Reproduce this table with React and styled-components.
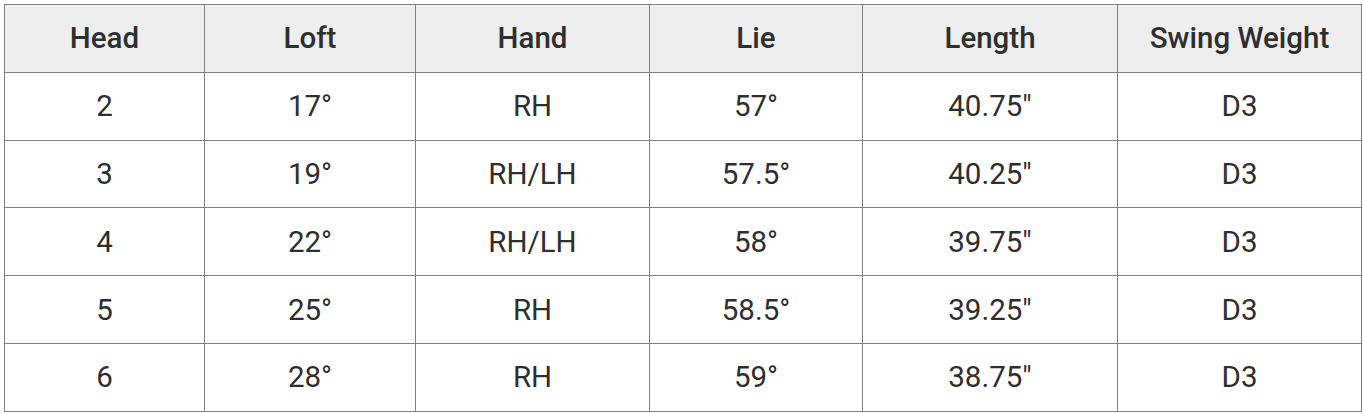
import React from 'react';
import styled, {createGlobalStyle} from "styled-components";

const GlobalStyle = createGlobalStyle`
body{
margin:0;
background:#fff;
font-family:Roboto, "Liberation Sans", sans-serif;
}
`;

const StyledWrapper=styled.div`
padding:4px 0 0 4px;
`;

const StyledTable=styled.table`
width:1357px;
border-collapse:collapse;
table-layout:fixed;
color:#2e2e2e;
font-size:29.5px;
`;

const StyledHeadCell=styled.th`
background-color:#eeeeee;
font-weight:500;
height:66.8px;
padding:0;
text-align:center;
border:1px solid #808080;
width:${props=>props.width}px;
`;

const StyledCell=styled.td`
height:66.8px;
padding:0;
text-align:center;
border:1px solid #808080;
`;

const columns=[
    {label:"Head", width:199},
    {label:"Loft", width:210},
    {label:"Hand", width:233},
    {label:"Lie", width:212},
    {label:"Length", width:254},
    {label:"Swing Weight", width:243},
];

const rows=[
    ["2","17°","RH","57°","40.75\"","D3"],
    ["3","19°","RH/LH","57.5°","40.25\"","D3"],
    ["4","22°","RH/LH","58°","39.75\"","D3"],
    ["5","25°","RH","58.5°","39.25\"","D3"],
    ["6","28°","RH","59°","38.75\"","D3"],
];

const App=()=>{
 return(
     <StyledWrapper>
         <GlobalStyle/>
         <StyledTable>
             <thead>
                 <tr>
                     {columns.map(col=><StyledHeadCell key={col.label} width={col.width}>{col.label}</StyledHeadCell>)}
                 </tr>
             </thead>
             <tbody>
                 {rows.map(row=>(
                     <tr key={row[0]}>
                         {row.map((value,i)=><StyledCell key={i}>{value}</StyledCell>)}
                     </tr>
                 ))}
             </tbody>
         </StyledTable>
     </StyledWrapper>
 )
}
export default App;
